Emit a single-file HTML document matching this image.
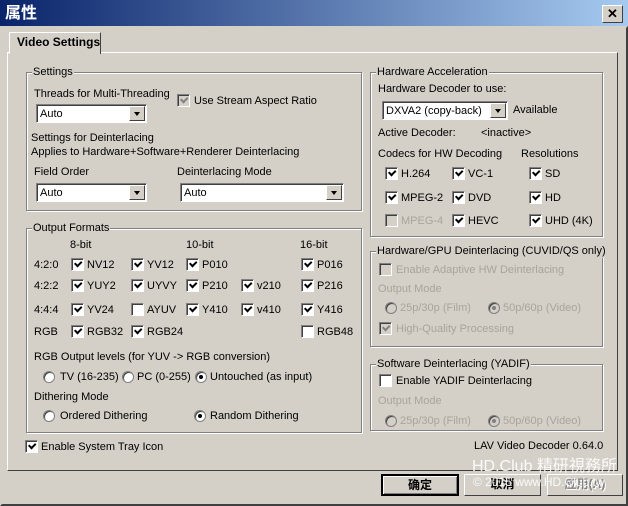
<!DOCTYPE html><html><head><meta charset="utf-8"><style>
*{box-sizing:border-box}
body{margin:0;width:628px;height:506px;background:#d4d0c8;font:11px "Liberation Sans","Noto Sans CJK SC",sans-serif;color:#000;position:relative;overflow:hidden}
.a{position:absolute;white-space:nowrap;line-height:14px}
.g{color:#a8a49c}
.grp{position:absolute;border:1px solid #808080;box-shadow:1px 1px 0 #fff inset,1px 1px 0 #fff}
.grp>span{position:absolute;top:-8px;left:5px;background:#d4d0c8;padding:0 1px;line-height:14px;white-space:nowrap}
.cb{position:absolute;width:13px;height:13px;background:#fff;border:1px solid;border-color:#808080 #fff #fff #808080;box-shadow:inset 1px 1px 0 #404040}
.cb.c::after{content:"";position:absolute;left:2px;top:1px;width:5px;height:3px;border-left:2px solid #000;border-bottom:2px solid #000;transform:rotate(-45deg) translate(0,1px) }
.cb.d{background:#d4d0c8}
.cb.d.c::after{border-color:#808080}
.rb{position:absolute;width:12px;height:12px;border-radius:50%;background:#fff;border:1px solid #808080;box-shadow:inset 1px 1px 0 #404040}
.rb.d{background:#d4d0c8}
.rb.s::after{content:"";position:absolute;left:3px;top:3px;width:4px;height:4px;border-radius:50%;background:#000}
.rb.d.s::after{background:#808080}
.cmb{position:absolute;height:19px;background:#fff;border:1px solid;border-color:#808080 #fff #fff #808080;box-shadow:inset 1px 1px 0 #404040;padding:2px 3px;line-height:14px}
.cmb i{position:absolute;right:1px;top:1px;width:16px;height:15px;background:#d4d0c8;border:1px solid;border-color:#fff #404040 #404040 #fff}
.cmb i::after{content:"";position:absolute;left:4px;top:5px;border:3.5px solid transparent;border-top:4px solid #000}
.btn{position:absolute;height:22px;background:#d4d0c8;border:1px solid;border-color:#fff #404040 #404040 #fff;text-align:center;line-height:19px;font-weight:bold;font-size:12px}
</style></head><body>
<div style="position:absolute;left:0;top:0;width:628px;height:26px;background:linear-gradient(90deg,#0a246a,#a6caf0)"></div>
<div class="a" style="left:5px;top:5px;color:#fff;font-weight:bold;font-size:16px;line-height:17px">属性</div>
<div style="position:absolute;left:602px;top:5px;width:21px;height:18px;background:#d4d0c8;border:1px solid;border-color:#fff #404040 #404040 #fff;text-align:center;font-weight:bold;font-size:13px;line-height:15px">✕</div>
<div style="position:absolute;left:0;top:26px;width:628px;height:480px;border:2px solid;border-color:#d4d0c8 #404040 #404040 #d4d0c8"></div>
<div style="position:absolute;left:7px;top:52px;width:611px;height:419px;border:1px solid;border-color:#fff #404040 #404040 #fff"></div>
<div style="position:absolute;left:9px;top:32px;width:92px;height:22px;background:#d4d0c8;border:1px solid;border-bottom:none;border-color:#fff #404040 #404040 #fff"></div>
<div class="a" style="left:17px;top:35px;font-weight:bold;font-size:12px">Video Settings</div>

<div class="grp" style="left:26px;top:72px;width:336px;height:139px"><span>Settings</span></div>
<div class="a" style="left:34px;top:87px">Threads for Multi-Threading</div>
<div class="cmb" style="left:36px;top:104px;width:111px">Auto<i></i></div>
<div class="cb d c" style="left:177px;top:94px"></div><div class="a" style="left:194px;top:94px">Use Stream Aspect Ratio</div>
<div class="a" style="left:31px;top:131px">Settings for Deinterlacing</div>
<div class="a" style="left:31px;top:145px">Applies to Hardware+Software+Renderer Deinterlacing</div>
<div class="a" style="left:34px;top:165px">Field Order</div>
<div class="cmb" style="left:36px;top:183px;width:111px">Auto<i></i></div>
<div class="a" style="left:177px;top:165px">Deinterlacing Mode</div>
<div class="cmb" style="left:180px;top:183px;width:164px">Auto<i></i></div>

<div class="grp" style="left:26px;top:228px;width:336px;height:205px"><span>Output Formats</span></div>
<div class="a" style="left:70px;top:238px">8-bit</div><div class="a" style="left:186px;top:238px">10-bit</div><div class="a" style="left:300px;top:238px">16-bit</div>
<div class="a" style="left:34px;top:258px">4:2:0</div>
<div class="cb c" style="left:71px;top:258px"></div><div class="a" style="left:87px;top:258px">NV12</div>
<div class="cb c" style="left:131px;top:258px"></div><div class="a" style="left:147px;top:258px">YV12</div>
<div class="cb c" style="left:186px;top:258px"></div><div class="a" style="left:202px;top:258px">P010</div>
<div class="cb c" style="left:301px;top:258px"></div><div class="a" style="left:317px;top:258px">P016</div>
<div class="a" style="left:34px;top:279px">4:2:2</div>
<div class="cb c" style="left:71px;top:279px"></div><div class="a" style="left:87px;top:279px">YUY2</div>
<div class="cb c" style="left:131px;top:279px"></div><div class="a" style="left:147px;top:279px">UYVY</div>
<div class="cb c" style="left:186px;top:279px"></div><div class="a" style="left:202px;top:279px">P210</div>
<div class="cb c" style="left:241px;top:279px"></div><div class="a" style="left:257px;top:279px">v210</div>
<div class="cb c" style="left:301px;top:279px"></div><div class="a" style="left:317px;top:279px">P216</div>
<div class="a" style="left:34px;top:303px">4:4:4</div>
<div class="cb c" style="left:71px;top:303px"></div><div class="a" style="left:87px;top:303px">YV24</div>
<div class="cb" style="left:131px;top:303px"></div><div class="a" style="left:147px;top:303px">AYUV</div>
<div class="cb c" style="left:186px;top:303px"></div><div class="a" style="left:202px;top:303px">Y410</div>
<div class="cb c" style="left:241px;top:303px"></div><div class="a" style="left:257px;top:303px">v410</div>
<div class="cb c" style="left:301px;top:303px"></div><div class="a" style="left:317px;top:303px">Y416</div>
<div class="a" style="left:34px;top:325px">RGB</div>
<div class="cb c" style="left:71px;top:325px"></div><div class="a" style="left:87px;top:325px">RGB32</div>
<div class="cb c" style="left:131px;top:325px"></div><div class="a" style="left:147px;top:325px">RGB24</div>
<div class="cb" style="left:301px;top:325px"></div><div class="a" style="left:317px;top:325px">RGB48</div>
<div class="a" style="left:34px;top:350px">RGB Output levels (for YUV -&gt; RGB conversion)</div>
<div class="rb" style="left:43px;top:371px"></div><div class="a" style="left:60px;top:370px">TV (16-235)</div>
<div class="rb" style="left:122px;top:371px"></div><div class="a" style="left:137px;top:370px">PC (0-255)</div>
<div class="rb s" style="left:195px;top:371px"></div><div class="a" style="left:210px;top:370px">Untouched (as input)</div>
<div class="a" style="left:34px;top:390px">Dithering Mode</div>
<div class="rb" style="left:43px;top:410px"></div><div class="a" style="left:60px;top:409px">Ordered Dithering</div>
<div class="rb s" style="left:194px;top:410px"></div><div class="a" style="left:210px;top:409px">Random Dithering</div>
<div class="cb c" style="left:25px;top:440px"></div><div class="a" style="left:41px;top:440px">Enable System Tray Icon</div>

<div class="grp" style="left:370px;top:72px;width:233px;height:165px"><span>Hardware Acceleration</span></div>
<div class="a" style="left:378px;top:82px">Hardware Decoder to use:</div>
<div class="cmb" style="left:382px;top:101px;width:126px">DXVA2 (copy-back)<i></i></div>
<div class="a" style="left:513px;top:103px">Available</div>
<div class="a" style="left:378px;top:126px">Active Decoder:</div><div class="a" style="left:481px;top:126px">&lt;inactive&gt;</div>
<div class="a" style="left:378px;top:147px">Codecs for HW Decoding</div><div class="a" style="left:521px;top:147px">Resolutions</div>
<div class="cb c" style="left:385px;top:167px"></div><div class="a" style="left:401px;top:167px">H.264</div>
<div class="cb c" style="left:452px;top:167px"></div><div class="a" style="left:468px;top:167px">VC-1</div>
<div class="cb c" style="left:529px;top:167px"></div><div class="a" style="left:545px;top:167px">SD</div>
<div class="cb c" style="left:385px;top:191px"></div><div class="a" style="left:401px;top:191px">MPEG-2</div>
<div class="cb c" style="left:452px;top:191px"></div><div class="a" style="left:468px;top:191px">DVD</div>
<div class="cb c" style="left:529px;top:191px"></div><div class="a" style="left:545px;top:191px">HD</div>
<div class="cb d" style="left:385px;top:214px"></div><div class="a g" style="left:401px;top:214px">MPEG-4</div>
<div class="cb c" style="left:452px;top:214px"></div><div class="a" style="left:468px;top:214px">HEVC</div>
<div class="cb c" style="left:529px;top:214px"></div><div class="a" style="left:545px;top:214px">UHD (4K)</div>

<div class="grp" style="left:370px;top:251px;width:233px;height:96px"><span>Hardware/GPU Deinterlacing (CUVID/QS only)</span></div>
<div class="cb d" style="left:379px;top:263px"></div><div class="a g" style="left:396px;top:263px">Enable Adaptive HW Deinterlacing</div>
<div class="a g" style="left:378px;top:282px">Output Mode</div>
<div class="rb d" style="left:385px;top:302px"></div><div class="a g" style="left:400px;top:301px">25p/30p (Film)</div>
<div class="rb d s" style="left:488px;top:302px"></div><div class="a g" style="left:503px;top:301px">50p/60p (Video)</div>
<div class="cb d c" style="left:379px;top:322px"></div><div class="a g" style="left:396px;top:322px">High-Quality Processing</div>

<div class="grp" style="left:370px;top:364px;width:233px;height:67px"><span>Software Deinterlacing (YADIF)</span></div>
<div class="cb" style="left:379px;top:374px"></div><div class="a" style="left:396px;top:374px">Enable YADIF Deinterlacing</div>
<div class="a g" style="left:378px;top:394px">Output Mode</div>
<div class="rb d" style="left:385px;top:415px"></div><div class="a g" style="left:400px;top:414px">25p/30p (Film)</div>
<div class="rb d s" style="left:488px;top:415px"></div><div class="a g" style="left:503px;top:414px">50p/60p (Video)</div>
<div class="a" style="left:474px;top:439px">LAV Video Decoder 0.64.0</div>

<div class="btn" style="left:381px;top:474px;width:78px;border:2px solid #000;box-shadow:inset 1px 1px 0 #fff,inset -1px -1px 0 #808080">确定</div>
<div class="btn" style="left:464px;top:474px;width:77px">取消</div>
<div class="btn" style="left:547px;top:474px;width:76px;color:#808080;text-shadow:1px 1px 0 #fff">应用(A)</div>
<div class="a" style="left:472px;top:458px;color:#fff;font-size:16px;line-height:17px;opacity:.9">HD.Club 精研視務所</div>
<div class="a" style="left:473px;top:475px;color:#fff;font-size:12px;opacity:.9">© 2015  www.HD.Club.tw</div>
</body></html>
